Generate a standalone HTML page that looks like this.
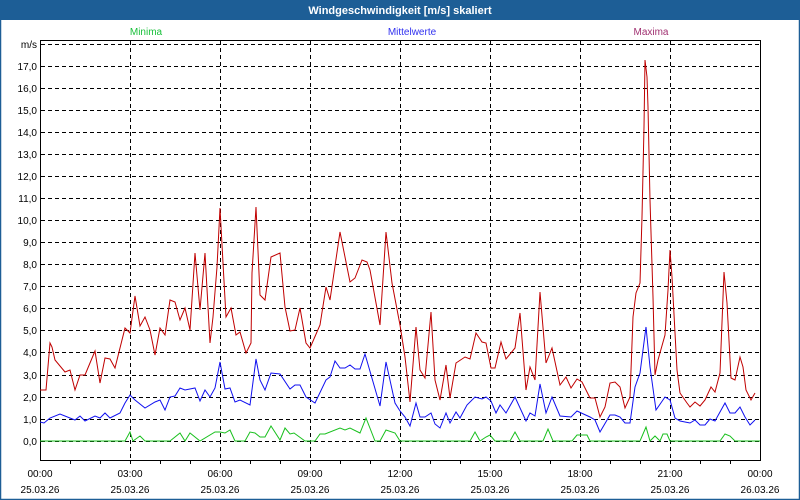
<!DOCTYPE html>
<html><head><meta charset="utf-8"><style>
html,body{margin:0;padding:0;background:#fff;}
svg{display:block;font-family:"Liberation Sans","DejaVu Sans",sans-serif;}
</style></head><body>
<svg width="800" height="500" viewBox="0 0 800 500" xmlns="http://www.w3.org/2000/svg">
<rect x="0" y="0" width="800" height="500" fill="#fff"/>
<rect x="0.5" y="0.5" width="799" height="499" fill="none" stroke="#1d5e96" stroke-width="1.5"/>
<rect x="0" y="0" width="800" height="20" fill="#1d5e96"/>
<text x="400" y="14" fill="#fff" font-size="11" font-weight="bold" text-anchor="middle">Windgeschwindigkeit [m/s] skaliert</text>
<g font-size="10" text-anchor="middle">
<text x="146" y="35" fill="#19c03a">Minima</text>
<text x="412" y="35" fill="#3030f0">Mittelwerte</text>
<text x="651" y="35" fill="#a03070">Maxima</text>
</g>
<g stroke="#000" stroke-width="1" stroke-dasharray="4,3" fill="none">
<path d="M41 44.5H760 M41 66.5H760 M41 88.5H760 M41 110.5H760 M41 132.5H760 M41 154.5H760 M41 176.5H760 M41 198.5H760 M41 220.5H760 M41 242.5H760 M41 264.5H760 M41 286.5H760 M41 308.5H760 M41 330.5H760 M41 352.5H760 M41 375.5H760 M41 397.5H760 M41 419.5H760 M41 441.5H760"/>
<path d="M130.5 41V460 M220.5 41V460 M310.5 41V460 M400.5 41V460 M490.5 41V460 M580.5 41V460 M670.5 41V460"/>
</g>
<rect x="40.5" y="40.5" width="720" height="420" fill="none" stroke="#000" stroke-width="1"/>
<path stroke="#000" stroke-width="1" d="M70.5 461v3M100.5 461v3M130.5 461v3M160.5 461v3M190.5 461v3M220.5 461v3M250.5 461v3M280.5 461v3M310.5 461v3M340.5 461v3M370.5 461v3M400.5 461v3M430.5 461v3M460.5 461v3M490.5 461v3M520.5 461v3M550.5 461v3M580.5 461v3M610.5 461v3M640.5 461v3M670.5 461v3M700.5 461v3M730.5 461v3"/>
<g font-size="10" text-anchor="end" fill="#000">
<text x="37" y="48">m/s</text>
<text x="37" y="70">17,0</text><text x="37" y="92">16,0</text><text x="37" y="114">15,0</text><text x="37" y="136">14,0</text><text x="37" y="158">13,0</text><text x="37" y="180">12,0</text><text x="37" y="202">11,0</text><text x="37" y="224">10,0</text><text x="37" y="246">9,0</text><text x="37" y="268">8,0</text><text x="37" y="290">7,0</text><text x="37" y="312">6,0</text><text x="37" y="334">5,0</text><text x="37" y="356">4,0</text><text x="37" y="379">3,0</text><text x="37" y="401">2,0</text><text x="37" y="423">1,0</text><text x="37" y="445">0,0</text>
</g>
<g font-size="10" text-anchor="middle" fill="#000">
<text x="40" y="477">00:00</text><text x="130" y="477">03:00</text><text x="220" y="477">06:00</text><text x="310" y="477">09:00</text><text x="400" y="477">12:00</text><text x="490" y="477">15:00</text><text x="580" y="477">18:00</text><text x="670" y="477">21:00</text><text x="760" y="477">00:00</text>
<text x="40" y="493">25.03.26</text><text x="130" y="493">25.03.26</text><text x="220" y="493">25.03.26</text><text x="310" y="493">25.03.26</text><text x="400" y="493">25.03.26</text><text x="490" y="493">25.03.26</text><text x="580" y="493">25.03.26</text><text x="670" y="493">25.03.26</text><text x="760" y="493">26.03.26</text>
</g>
<g fill="none" stroke-width="1">
<polyline stroke="#19c01e" points="40,441 125,441 130,432 133,441 140,436 145,441 170,441 180,433 185,441 190,433 200,441 215,432 220,432 225,433 230,430 235,441 245,441 250,432 255,433 260,437 265,437 271,426 280,440 285,428 290,434 294,433 305,441 315,441 320,434 325,434 340,428 345,430 350,428 360,433 366,418 375,441 380,441 386,430 395,433 400,441 470,441 475,432 480,441 486,437 490,435 495,441 510,441 515,432 520,441 543,441 548,429 553,441 572,441 577,435 587,435 590,441 640,441 646,427 650,441 655,436 660,441 663,434 667,434 670,441 720,441 725,434 730,436 735,441 760,441"/>
<polyline stroke="#1010f0" points="40,422 44,423 50,418 60,414 75,420 80,416 85,421 95,416 100,418 105,413 110,418 120,413 125,403 130,395 135,400 145,408 155,402 160,400 165,410 170,397 175,396 180,388 185,390 195,388 200,401 205,390 210,397 215,388 220,362 225,389 230,388 235,402 240,400 250,405 256,359 260,380 265,390 271,373 280,374 290,389 295,385 300,385 306,397 315,403 326,380 330,377 335,361 340,368 345,368 350,365 355,369 360,369 365,354 380,406 386,362 395,403 400,411 405,417 410,426 416,403 420,417 425,417 431,413 435,424 440,428 446,413 450,423 456,412 460,418 467,405 475,397 482,399 486,397 491,401 496,413 500,405 506,413 515,397 526,421 530,413 535,416 540,384 546,413 552,397 560,416 571,417 577,411 590,417 595,420 600,432 610,415 615,415 620,417 625,423 630,423 635,387 640,373 646,327 650,367 656,410 665,397 670,400 675,418 680,421 690,423 695,420 700,425 705,425 710,419 715,421 725,403 730,413 735,413 740,407 745,417 750,425 755,420"/>
<polyline stroke="#c00000" points="40,390 46,390 50,343 52,347 55,360 65,372 70,370 75,390 80,375 85,375 95,351 100,383 105,358 110,359 115,368 125,328 130,333 135,296 140,326 145,317 150,330 155,355 160,328 165,335 170,300 175,302 180,320 185,308 190,330 195,253 200,310 205,253 210,343 213,317 217,267 220,208 223,263 226,317 231,308 236,335 240,332 246,353 251,343 252,273 256,207 260,295 265,300 271,257 280,253 285,307 290,331 295,330 300,308 306,343 310,348 320,325 326,287 330,300 340,232 350,282 355,278 362,260 367,262 370,270 380,325 386,232 392,283 400,325 405,357 410,402 416,327 420,370 425,378 431,312 435,380 440,400 446,365 450,398 456,363 465,357 470,359 476,333 482,342 486,343 491,368 495,368 501,342 506,359 515,348 520,313 526,390 530,367 535,380 540,292 546,363 552,348 560,385 566,377 571,388 577,379 582,382 590,398 595,398 600,417 605,407 610,383 615,382 620,387 625,408 630,397 633,317 636,293 640,283 642,217 644,127 645,60 647,77 648,107 650,200 653,297 655,375 658,360 665,335 668,290 670,250 672,277 677,370 680,393 687,403 690,407 695,402 700,406 705,400 711,387 715,392 720,373 724,272 727,303 731,378 735,380 740,357 743,367 746,390 751,400 755,393"/>
</g>
</svg>
</body></html>
